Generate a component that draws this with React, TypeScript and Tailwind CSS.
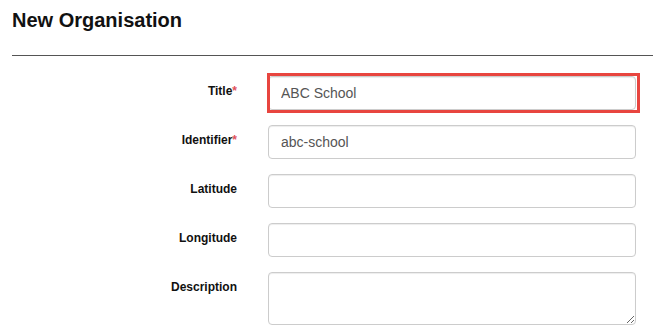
import React from "react";

const inputCls =
  "block w-full h-[34px] px-[12px] border border-[#cccccc] rounded-[4px] bg-white text-[14px] text-[#555555] shadow-[inset_0_1px_1px_rgba(0,0,0,0.075)] outline-none font-['Liberation_Sans',Arial,sans-serif]";

function Label({ text, required }: { text: string; required?: boolean }) {
  return (
    <div className="w-[225px] shrink-0 text-right pt-[7px] text-[12px] leading-[17px] font-bold text-[#111111]">
      {text}
      {required && <span className="text-[#e0505a]">*</span>}
    </div>
  );
}

export default function App() {
  return (
    <div className="min-h-[333px] bg-white pl-[12px] font-['Liberation_Sans',Arial,sans-serif]">
      <h1 className="pt-[9px] text-[20px] leading-[22px] font-bold text-[#111111]">New Organisation</h1>
      <div className="mt-[24px] border-t border-[#555555]" />
      <div className="mt-[20px] flex flex-col gap-[15px]">
        <div className="flex gap-[31px]">
          <Label text="Title" required />
          <div className="relative w-[368px]">
            <input className={inputCls} defaultValue="ABC School" readOnly />
            <div className="pointer-events-none absolute left-[-1px] top-[-3px] right-[-4px] bottom-[-3px] border-[3px] border-[#e8453f]" />
          </div>
        </div>
        <div className="flex gap-[31px]">
          <Label text="Identifier" required />
          <div className="w-[368px]">
            <input className={inputCls} defaultValue="abc-school" readOnly />
          </div>
        </div>
        <div className="flex gap-[31px]">
          <Label text="Latitude" />
          <div className="w-[368px]">
            <input className={inputCls} readOnly />
          </div>
        </div>
        <div className="flex gap-[31px]">
          <Label text="Longitude" />
          <div className="w-[368px]">
            <input className={inputCls} readOnly />
          </div>
        </div>
        <div className="flex gap-[31px]">
          <Label text="Description" />
          <div className="w-[368px]">
            <textarea
              className="block w-full h-[53px] px-[12px] py-[6px] border border-[#cccccc] rounded-[4px] bg-white text-[14px] text-[#555555] shadow-[inset_0_1px_1px_rgba(0,0,0,0.075)] outline-none resize-y font-['Liberation_Sans',Arial,sans-serif]"
              readOnly
            />
          </div>
        </div>
      </div>
    </div>
  );
}
